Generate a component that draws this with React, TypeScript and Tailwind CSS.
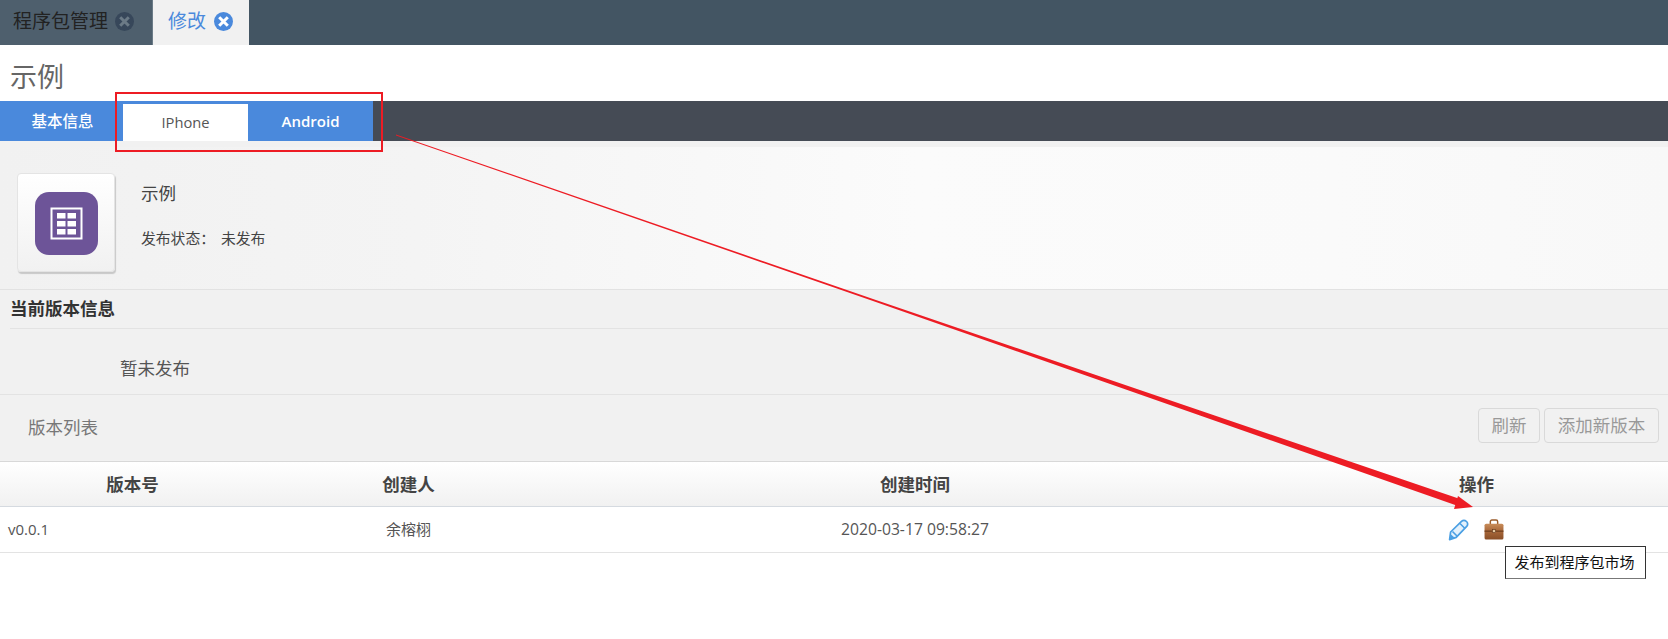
const cjk = { fontFamily: '"Open Sans","Noto Sans CJK SC",sans-serif' };

function CloseDot({ bg, fg, ml }: { bg: string; fg: string; ml: string }) {
  return (
    <svg width="19" height="19" viewBox="0 0 19 19" className={ml + " shrink-0"}>
      <circle cx="9.5" cy="9.5" r="9.5" fill={bg} />
      <path d="M5.2 5.2 13.8 13.8M13.8 5.2 5.2 13.8" stroke={fg} strokeWidth="3" />
    </svg>
  );
}

function Pencil() {
  return (
    <svg width="22" height="22" viewBox="0 0 22 22">
      <path d="M2.6 13 13.5 2.4c1.5-1.4 3.6-1.2 5 .1s1.6 3.5.2 4.9L8.2 18.4 1.6 20.6Z" fill="#e3f1fc" stroke="#4a9fe3" strokeWidth="1.7" strokeLinejoin="round" />
      <path d="M12 4.5 17 9.5M4.5 12.5 9 17" stroke="#4a9fe3" strokeWidth="1.6" />
      <path d="M1.6 20.6 2.8 15.2 7 19Z" fill="#4a9fe3" />
    </svg>
  );
}

function Briefcase() {
  return (
    <svg width="20" height="21" viewBox="0 0 19 20">
      <defs>
        <linearGradient id="case" x1="0" y1="0" x2="0" y2="1">
          <stop offset="0" stopColor="#c98d5a" />
          <stop offset="0.45" stopColor="#a9683a" />
          <stop offset="1" stopColor="#8a4f27" />
        </linearGradient>
      </defs>
      <path d="M6 5V2.5C6 1.5 6.7 1 7.5 1h4c.8 0 1.5.5 1.5 1.5V5" fill="none" stroke="#9a5c2c" strokeWidth="1.4" />
      <rect x="0.5" y="4.5" width="18" height="15" rx="1.5" fill="url(#case)" />
      <rect x="0.5" y="11" width="18" height="1.2" fill="#6f4020" />
      <rect x="8" y="10" width="3" height="3" fill="#e5c9a0" stroke="#5f3418" strokeWidth="0.6" />
    </svg>
  );
}

function AppIcon() {
  return (
    <svg width="63" height="63" viewBox="0 0 63 63" className="ml-[1px] mt-[2px]">
      <rect width="63" height="63" rx="14" fill="#6d5498" />
      <rect x="16.5" y="16.5" width="30" height="30" fill="none" stroke="#fff" strokeWidth="2" />
      {[21, 29, 37].map((y) => (
        <g key={y}>
          <rect x="22" y={y} width="8.5" height="5.5" fill="#fff" />
          <rect x="32.5" y={y} width="8.5" height="5.5" fill="#fff" />
        </g>
      ))}
    </svg>
  );
}

export default function App() {
  return (
    <div className="relative h-[639px] w-[1668px] overflow-hidden bg-white text-[#333]" style={cjk}>
      <div className="flex h-[45px] bg-[#435563]">
        <div className="flex w-[153px] items-center border-r border-[#6b7b87] bg-[#4e5f6d] pb-[3px] pl-[13px] text-[19px] text-[#222]">
          程序包管理
          <CloseDot bg="#37475a" fg="#6b7a86" ml="ml-[7px]" />
        </div>
        <div className="flex w-[96px] items-center bg-[#f1f1f1] pb-[3px] pl-[15px] text-[19px] text-[#4a89dc]">
          修改
          <CloseDot bg="#4a89dc" fg="#ffffff" ml="ml-[8px]" />
        </div>
      </div>

      <div className="flex h-[56px] items-center pl-[10px] pt-[9px] text-[27px] text-[#666]">示例</div>

      <div className="flex h-[40px] bg-[#454b55] font-medium text-white">
        <div className="flex w-[373px] bg-[#4a89dc]">
          <div className="flex w-[125px] items-center justify-center pt-[1px] text-[15.5px]">基本信息</div>
          <div className="ml-[-2px] mt-[3px] flex w-[125px] items-center justify-center bg-white text-[14.7px] font-normal text-[#555]">IPhone</div>
          <div className="flex w-[125px] items-center justify-center pt-[1px] text-[15px] font-semibold">Android</div>
        </div>
      </div>

      <div className="flex h-[149px] items-start border-b border-t-[6px] border-b-[#e2e2e2] border-t-[#f1f1f1] bg-[linear-gradient(90deg,#f1f1f1_0%,#f4f4f4_25%,#fbfbfb_55%,#fafafa_80%,#f8f8f8_100%)] pl-[17px] pt-[26px]">
        <div className="flex h-[99px] w-[98px] items-center justify-center rounded-[4px] border border-[#e4e4e4] bg-gradient-to-b from-white to-[#f1f1f1] shadow-[1px_2px_1px_#c8c8c8]">
          <AppIcon />
        </div>
        <div className="ml-[26px] mt-[8px]">
          <div className="text-[17.5px] leading-[24px] text-[#444]">示例</div>
          <div className="mt-[23px] text-[14.8px] leading-[20px] text-[#444]">
            发布状态：<span className="ml-[6px]">未发布</span>
          </div>
        </div>
      </div>

      <div className="bg-[#f1f1f1]">
        <div className="ml-[10px] flex h-[39px] items-center border-b border-[#e3e3e3] pb-[1px] text-[17.5px] font-semibold text-[#333]">当前版本信息</div>
        <div className="flex h-[66px] items-center border-b border-[#e3e3e3] pl-[120px] pt-[13px] text-[17.5px] text-[#555]">暂未发布</div>
        <div className="flex h-[67px] items-start justify-between border-b border-[#d8d8d8] pl-[28px] pr-[9px] pt-[13px]">
          <div className="pt-[6px] text-[17.5px] leading-[26px] text-[#777]">版本列表</div>
          <div className="flex gap-[4px]">
            <div className="flex h-[35px] w-[62px] items-center justify-center rounded-[4px] border border-[#d9d9d9] text-[17.5px] text-[#999]">刷新</div>
            <div className="flex h-[35px] w-[115px] items-center justify-center rounded-[4px] border border-[#d9d9d9] text-[17.5px] text-[#999]">添加新版本</div>
          </div>
        </div>
      </div>

      <div className="grid h-[45px] grid-cols-[265px_287px_726px_1fr] items-center border-b border-[#d5dae0] bg-gradient-to-b from-white to-[#f1f1f1] text-[17.5px] font-semibold text-[#444]">
        <div className="text-center">版本号</div>
        <div className="text-center">创建人</div>
        <div className="text-center">创建时间</div>
        <div className="pl-[181px]">操作</div>
      </div>
      <div className="grid h-[46px] grid-cols-[265px_287px_726px_1fr] items-center border-b border-[#e3e3e3] text-[15px] text-[#555]">
        <div className="pl-[8px]">v0.0.1</div>
        <div className="text-center">余榕栩</div>
        <div className="text-center text-[15.7px]">2020-03-17 09:58:27</div>
        <div className="flex items-center gap-[14px] pl-[170px]">
          <Pencil />
          <Briefcase />
        </div>
      </div>

      <div className="absolute left-[1505px] top-[546px] flex h-[33px] w-[141px] items-center justify-center border border-[#333] border-b-[#777] bg-white pr-[2px] text-[15px] text-[#111]">发布到程序包市场</div>

      <div className="pointer-events-none absolute left-[115px] top-[92px] h-[60px] w-[268px] border-2 border-[#ed1c24]" />
      <svg className="pointer-events-none absolute left-0 top-0" width="1668" height="639" viewBox="0 0 1668 639">
        <polygon points="396,134.5 873,299 1200,410.5 1460,499 1458,506 1200,415.5 873,301 396,135.5" fill="#ed1c24" />
        <polygon points="1473,507 1458,496 1454,509" fill="#ed1c24" />
      </svg>
    </div>
  );
}
